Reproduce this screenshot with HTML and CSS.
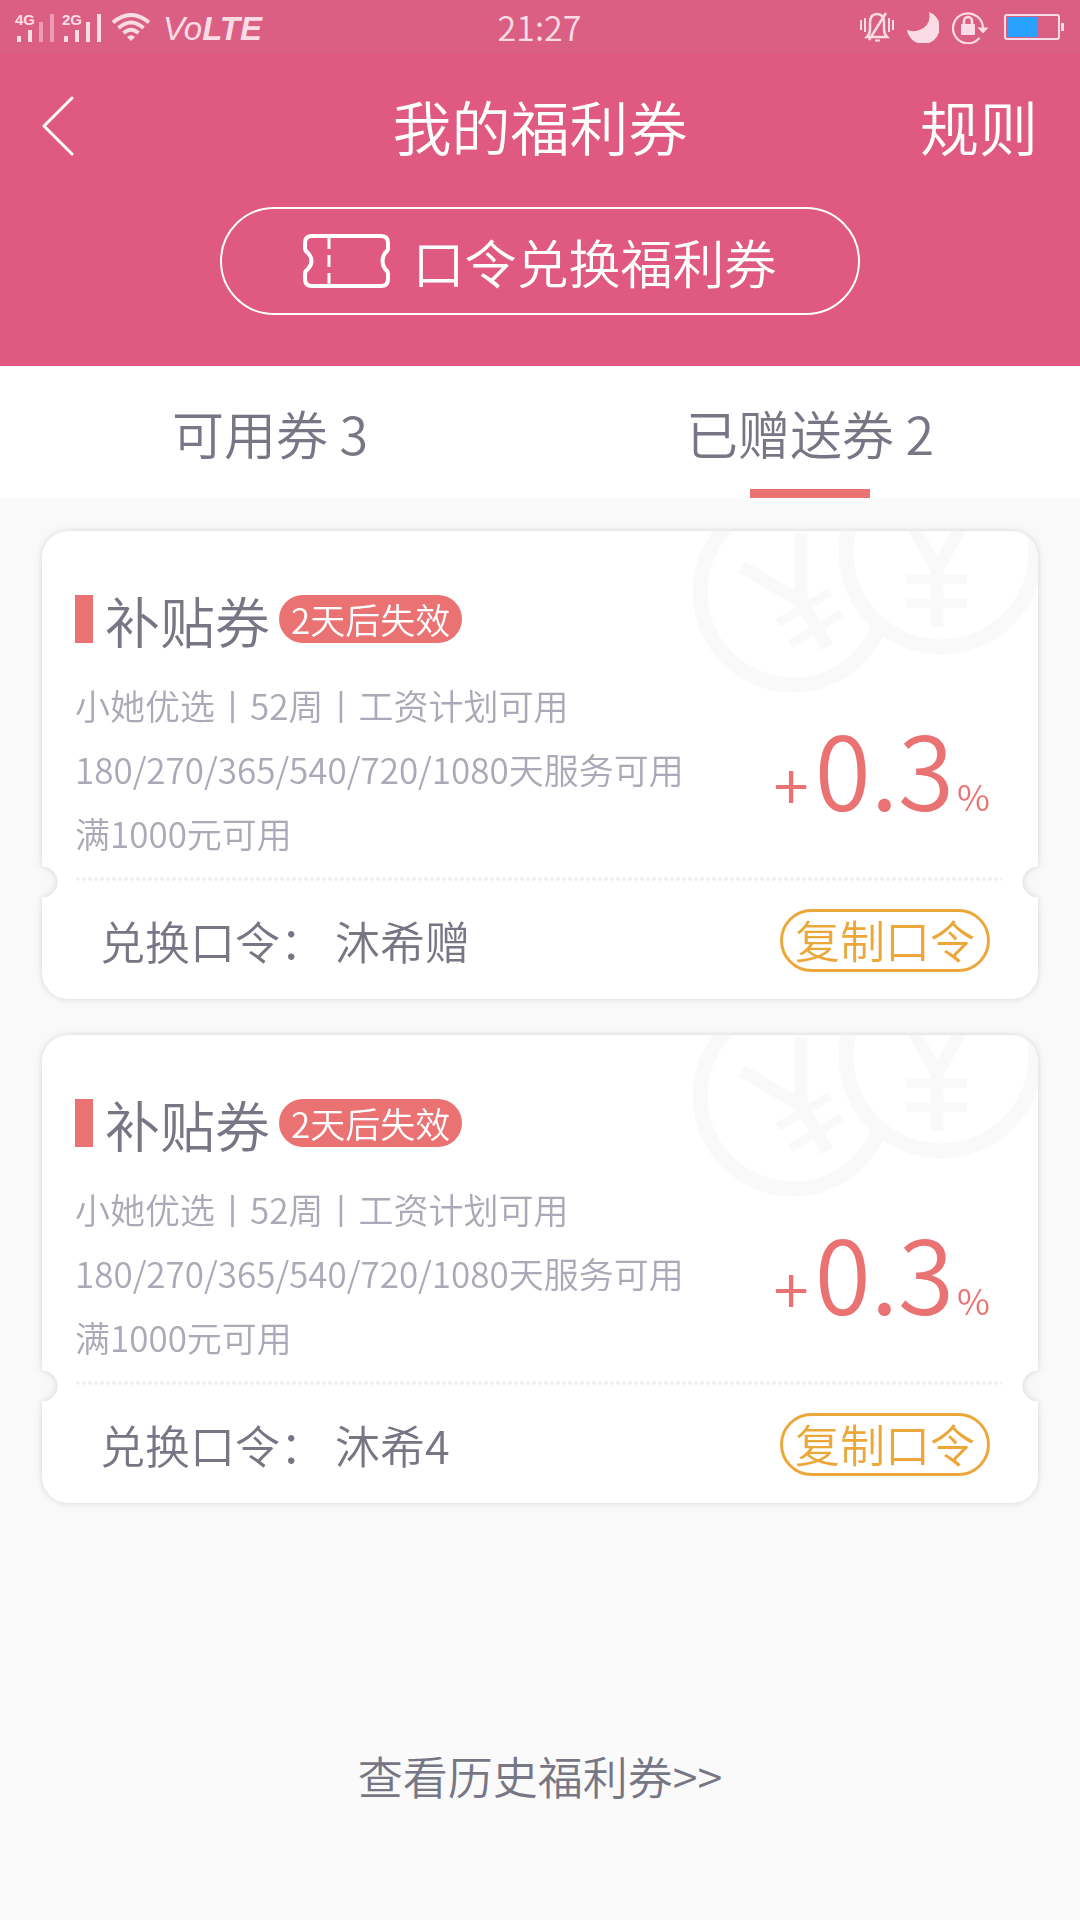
FILE: index.html
```html
<!DOCTYPE html>
<html lang="zh-CN">
<head>
<meta charset="utf-8">
<meta name="viewport" content="width=device-width, initial-scale=1">
<title>我的福利券</title>
<link rel="stylesheet" href="styles.css">
</head>
<body>
<svg class="defs" aria-hidden="true">
  <symbol id="coins" viewBox="0 0 345 165">
    <g fill="none" stroke="#f9f9f9">
      <circle cx="100" cy="61" r="93" stroke-width="15"/>
      <path d="M49 36L110 72L134 116M108 2V72" stroke-width="13"/>
      <path d="M85 92L137 61M97 113L149 82" stroke-width="9"/>
      <circle cx="248" cy="21" r="95" fill="#fff" stroke-width="15"/>
      <path d="M211 -20L244 38L277 -20M244 36V96" stroke-width="13"/>
      <path d="M213 48H274M213 72H274" stroke-width="9"/>
    </g>
  </symbol>
</svg>

<header class="top">
  <div class="status">
    <div class="status__left">
      <svg class="status__signal" viewBox="0 0 87 30" width="87" height="30" role="img" aria-label="信号">
        <g class="status__net">
          <text x="0" y="13">4G</text>
          <text x="47" y="13">2G</text>
        </g>
        <path d="M2 24h4v6h-4zM13 18h4v12h-4zM49 24h4v6h-4zM60 18h4v12h-4zM71 10h4v20h-4zM82 2h4v28h-4z" fill="#fadce6"/>
        <path d="M24 10h4v20h-4zM35 2h4v28h-4z" fill="#eb9bb5"/>
      </svg>
      <svg viewBox="0 0 38 28" width="38" height="28" role="img" aria-label="无线网络">
        <g fill="none" stroke="#fadce6" stroke-width="4">
          <path d="M1 9.500Q19 -5.500 37 9.500"/>
          <path d="M6.500 15Q19 4 31.500 15"/>
          <path d="M11.500 20Q19 13.500 26.500 20"/>
        </g>
        <path d="M15 24Q19 20.500 23 24L19 28Z" fill="#fadce6"/>
      </svg>
      <span class="status__volte">Vo<b>LTE</b></span>
    </div>
    <time class="status__time">21:27</time>
    <div class="status__right">
      <svg viewBox="0 0 34 30" width="34" height="30" role="img" aria-label="静音">
        <g fill="none" stroke="#fadce6" stroke-width="2">
          <path d="M1 8v10M5 6v14M29 6v14M33 8v10" />
          <path d="M7 25H27Q24 22 24 17V11Q24 2 17 2Q10 2 10 11V17Q10 22 7 25ZM9 28L26 1" stroke-width="2.500"/>
          <path d="M15 28.500h5"/>
        </g>
      </svg>
      <svg viewBox="0 0 32 31" width="32" height="31" role="img" aria-label="勿扰">
        <path d="M22 0A16.500 16.500 0 1 1 0 18Q5 20 11 18.500Q25 14 22 0Z" fill="#fadce6"/>
      </svg>
      <svg viewBox="0 0 36 33" width="36" height="33" role="img" aria-label="方向锁定">
        <path d="M27.500 27A15 15 0 1 1 31 17" fill="none" stroke="#fadce6" stroke-width="2.200"/>
        <path d="M25.500 16.500h11l-5.500 6z" fill="#fadce6"/>
        <rect x="9" y="13" width="14" height="11" rx="1" fill="#fadce6"/>
        <path d="M12 14V10a4 4 0 0 1 8 0V14" fill="none" stroke="#fadce6" stroke-width="2.600"/>
      </svg>
      <svg class="status__battery" viewBox="0 0 60 26" width="60" height="26" role="img" aria-label="电量">
        <rect x="1" y="1" width="54" height="24" rx="2" fill="none" stroke="#fadce6" stroke-width="2"/>
        <rect x="3" y="3" width="30" height="20" fill="#28a0ff"/>
        <path d="M57 9h3v8h-3z" fill="#fadce6"/>
      </svg>
    </div>
  </div>

  <nav class="nav">
    <button class="nav__back" type="button" aria-label="返回">
      <svg viewBox="0 0 32 60" width="32" height="60" fill="none" stroke="#fff" stroke-width="3" stroke-linecap="round" stroke-linejoin="round"><path d="M30 2L2 30L30 58"/></svg>
    </button>
    <h1 class="nav__title">我的福利券</h1>
    <a class="nav__rules" href="#rules">规则</a>
  </nav>

  <button class="redeem" type="button">
    <svg viewBox="0 0 87 54" width="87" height="54" fill="none" stroke="#fff" aria-hidden="true">
      <path d="M9 2H78Q85 2 85 9V14Q85 17 82 19Q77 27 82 35Q85 37 85 40V45Q85 52 78 52H9Q2 52 2 45V40Q2 37 5 35Q12 27 5 19Q2 17 2 14V9Q2 2 9 2Z" stroke-width="4"/>
      <path d="M26 3V15M26 21V33M26 39V51" stroke-width="3"/>
    </svg>
    <span>口令兑换福利券</span>
  </button>
</header>

<div class="tabs" role="tablist">
  <button class="tab" type="button" role="tab" aria-selected="false">可用券 3</button>
  <button class="tab tab--active" type="button" role="tab" aria-selected="true">已赠送券 2</button>
</div>

<main class="list">
  <article class="coupon">
    <div class="coupon__sheet">
      <svg class="coupon__coins" width="345" height="165" aria-hidden="true"><use href="#coins"/></svg>
      <div class="coupon__head">
        <h2 class="coupon__name">补贴券</h2>
        <span class="coupon__badge">2天后失效</span>
      </div>
      <div class="coupon__info">
        <div class="coupon__terms">
          <p>小她优选丨52周丨工资计划可用</p>
          <p>180/270/365/540/720/1080天服务可用</p>
          <p>满1000元可用</p>
        </div>
        <p class="coupon__rate"><span class="coupon__plus">+</span>0.3<span class="coupon__unit">%</span></p>
      </div>
      <div class="coupon__foot">
        <p class="coupon__code">兑换口令： 沐希赠</p>
        <button class="coupon__copy" type="button">复制口令</button>
      </div>
    </div>
  </article>

  <article class="coupon">
    <div class="coupon__sheet">
      <svg class="coupon__coins" width="345" height="165" aria-hidden="true"><use href="#coins"/></svg>
      <div class="coupon__head">
        <h2 class="coupon__name">补贴券</h2>
        <span class="coupon__badge">2天后失效</span>
      </div>
      <div class="coupon__info">
        <div class="coupon__terms">
          <p>小她优选丨52周丨工资计划可用</p>
          <p>180/270/365/540/720/1080天服务可用</p>
          <p>满1000元可用</p>
        </div>
        <p class="coupon__rate"><span class="coupon__plus">+</span>0.3<span class="coupon__unit">%</span></p>
      </div>
      <div class="coupon__foot">
        <p class="coupon__code">兑换口令： 沐希4</p>
        <button class="coupon__copy" type="button">复制口令</button>
      </div>
    </div>
  </article>
</main>

<footer class="history"><a href="#history">查看历史福利券&gt;&gt;</a></footer>
</body>
</html>
```

FILE: styles.css
```css
:root {
  --pink: #df5980;
  --red: #eb7272;
  --orange: #eca73a;
  --ink: #777685;
  --muted: #a9a9b7;
  --page: #fafafa;
  --status: #fadce6;
}

* {
  box-sizing: border-box;
}

body {
  margin: 0;
  min-height: 100vh;
  background: var(--page);
  color: var(--ink);
  font-family: "Noto Sans CJK SC", sans-serif;
  font-weight: 350;
}

h1, h2, p {
  margin: 0;
  font-weight: inherit;
}

button {
  margin: 0;
  padding: 0;
  border: 0;
  background: none;
  color: inherit;
  font: inherit;
}

a {
  color: inherit;
  text-decoration: none;
}

svg {
  display: block;
  flex: none;
}

.defs {
  position: absolute;
  width: 0;
  height: 0;
}

/* header */
.top {
  padding-bottom: 51px;
  background: var(--pink);
  color: #fff;
}

.status {
  display: grid;
  grid-template-columns: 1fr auto 1fr;
  align-items: center;
  height: 54px;
  padding: 0 16px 0 15px;
  background: #da5f82;
  color: var(--status);
}

.status__left,
.status__right {
  display: flex;
  align-items: center;
  gap: 10px;
}

.status__right {
  justify-content: flex-end;
  gap: 13px;
}

.status__net {
  fill: var(--status);
  font: bold 15px "Liberation Sans", sans-serif;
}

.status__volte {
  padding: 4px 0 0 3px;
  font: italic 33px/50px "Liberation Sans", sans-serif;
}

.status__time {
  font-size: 34px;
  line-height: 54px;
}

.status__battery {
  margin-left: 3px;
}

.nav {
  display: grid;
  grid-template-columns: 1fr auto 1fr;
  align-items: center;
  height: 143px;
  margin-bottom: 10px;
  padding: 0 42px;
  font-size: 59px;
  line-height: 80px;
}

.nav__back {
  justify-self: start;
}

.nav__title {
  font-size: inherit;
}

.nav__rules {
  justify-self: end;
}

.redeem {
  display: flex;
  align-items: center;
  justify-content: center;
  gap: 22px;
  width: 640px;
  max-width: 90%;
  height: 108px;
  margin: 0 auto;
  border: 2px solid #fff;
  border-radius: 54px;
  font-size: 52px;
}

/* tabs */
.tabs {
  display: flex;
  background: #fff;
}

.tab {
  flex: 1;
  height: 132px;
  font-size: 52px;
}

.tab--active {
  background: linear-gradient(var(--red), var(--red)) center bottom / 120px 9px no-repeat;
}

/* coupons */
.list {
  display: grid;
  gap: 36px;
  padding: 33px 42px 0;
}

.coupon {
  filter: drop-shadow(0 0 3px rgba(0, 0, 0, 0.12)) drop-shadow(0 0 8px rgba(0, 0, 0, 0.04));
}

.coupon__sheet {
  position: relative;
  padding-top: 56px;
  border-radius: 26px;
  background: #fff;
  overflow: hidden;
  mask:
    radial-gradient(circle at left 0 bottom 117px, transparent 15px, #000 16px),
    radial-gradient(circle at right 0 bottom 117px, transparent 15px, #000 16px);
  mask-composite: intersect;
}

.coupon__coins {
  position: absolute;
  top: 0;
  right: 0;
}

.coupon__head {
  display: flex;
  align-items: center;
  gap: 9px;
  position: relative;
  padding-left: 33px;
}

.coupon__name {
  display: flex;
  align-items: center;
  gap: 12px;
  font-size: 55px;
  line-height: 64px;
}

.coupon__name::before {
  content: "";
  width: 18px;
  height: 48px;
  background: var(--red);
}

.coupon__badge {
  padding: 0 12px;
  border-radius: 24px;
  background: var(--red);
  color: #fff;
  font-size: 35px;
  line-height: 48px;
}

.coupon__info {
  display: flex;
  justify-content: space-between;
  height: 230px;
  margin: 0 36px 0 33px;
  padding-top: 22px;
  background: radial-gradient(circle, #f0f0f0 2px, transparent 2px) left bottom / 6px 4px repeat-x;
}

.coupon__terms {
  color: var(--muted);
  font-size: 35px;
  line-height: 64px;
  white-space: nowrap;
}

.coupon__rate {
  display: flex;
  align-items: baseline;
  padding: 34px 12px 0 0;
  color: var(--red);
  font-size: 102px;
  line-height: 120px;
}

.coupon__plus {
  margin-right: 6px;
  font-size: 64px;
}

.coupon__unit {
  margin-left: 3px;
  font-size: 36px;
}

.coupon__foot {
  display: flex;
  align-items: center;
  justify-content: space-between;
  height: 118px;
  padding: 0 48px 0 58px;
}

.coupon__code {
  font-size: 45px;
}

.coupon__copy {
  width: 210px;
  height: 63px;
  border: 3px solid var(--orange);
  border-radius: 32px;
  color: var(--orange);
  font-size: 45px;
  line-height: 56px;
}

.history {
  padding: 240px 0 110px;
  font-size: 45px;
  line-height: 66px;
  text-align: center;
}
```
